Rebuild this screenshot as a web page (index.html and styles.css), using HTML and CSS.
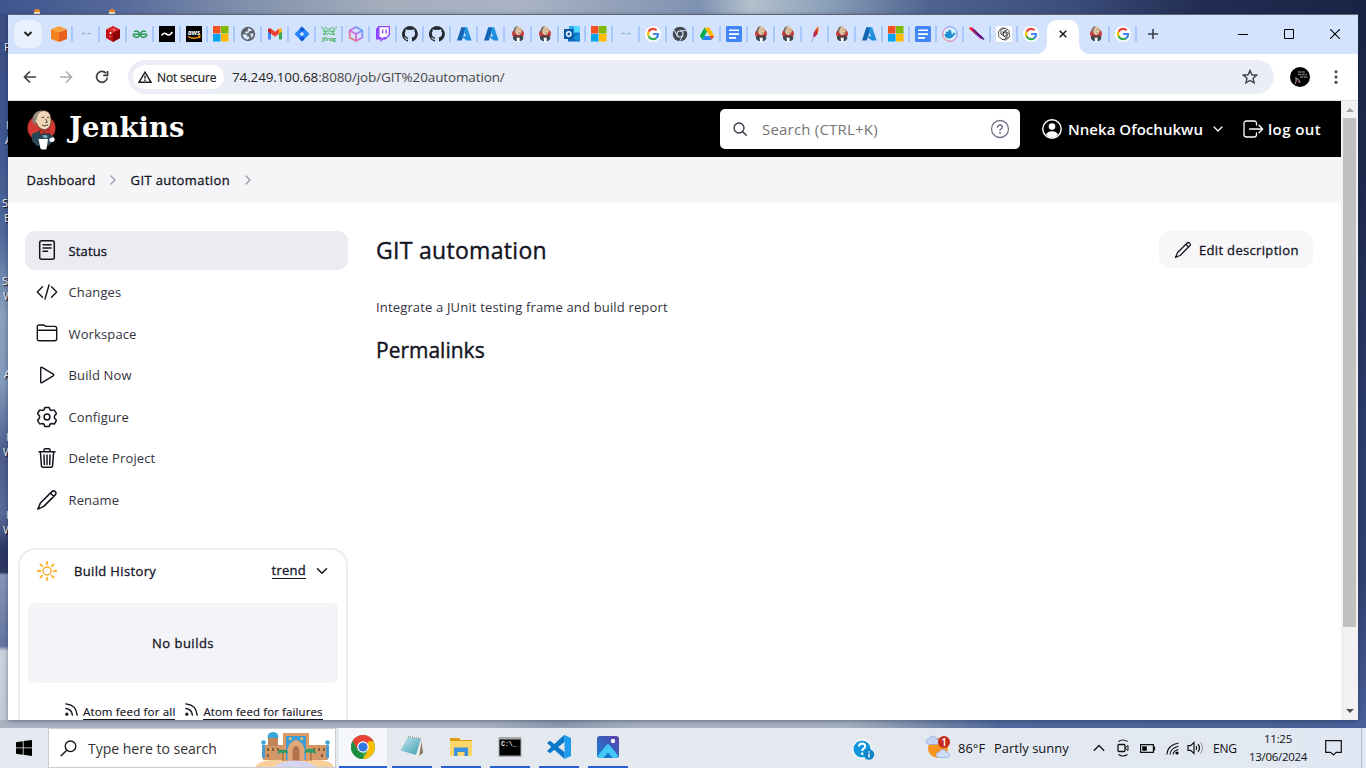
FILE: index.html
```html
<!DOCTYPE html>
<html lang="en">
<head>
<meta charset="utf-8">
<title>GIT automation [Jenkins]</title>
<link rel="stylesheet" href="styles.css">
</head>
<body>
<svg class="defs" aria-hidden="true">
  <defs>
    <linearGradient id="azg" x1="0" y1="0" x2="1" y2="1"><stop offset="0" stop-color="#2aa5e8"/><stop offset="1" stop-color="#1b82d8"/></linearGradient>
    <linearGradient id="cubeg" x1="0" y1="1" x2="1" y2="0"><stop offset="0" stop-color="#ff7a59"/><stop offset=".5" stop-color="#c56be8"/><stop offset="1" stop-color="#38bdf8"/></linearGradient>
    <linearGradient id="feag" x1="0" y1="1" x2="1" y2="0"><stop offset="0" stop-color="#8a2a8b"/><stop offset=".5" stop-color="#d22128"/><stop offset="1" stop-color="#f79a23"/></linearGradient>
    <linearGradient id="photog" x1="0" y1="1" x2="1" y2="0"><stop offset="0" stop-color="#1683d8"/><stop offset="1" stop-color="#5a3fa5"/></linearGradient>
    <linearGradient id="noteg" x1="0" y1="0" x2="1" y2="1"><stop offset="0" stop-color="#bfe6ea"/><stop offset="1" stop-color="#3f9db4"/></linearGradient>
    <symbol id="f-aws" viewBox="0 0 16 16"><path fill="#f9a13a" d="M8 0l8 3.3L8 6.6 0 3.3z"/><path fill="#f58220" d="M0 3.3l8 3.3V16l-8-3z"/><path fill="#e8601c" d="M16 3.3L8 6.6V16l8-3z"/></symbol>
    <symbol id="f-line" viewBox="0 0 16 16"><path fill="none" stroke="#86b3b5" stroke-width="1.200" d="M4 8q1.500-1.400 3-.5M8 8h1.500M10 7.500q1.500-.3 2.500.8"/></symbol>
    <symbol id="f-red" viewBox="0 0 16 16"><path fill="#c41212" d="M8 0l7 3.500v8.500l-7 4-7-4V3.500z"/><path fill="#8a0606" d="M8 7l7-3.500v8.500l-7 4z"/><path fill="#dd2c2c" d="M8 .5l6.500 3L8 6.500 1.500 3.500z"/><circle cx="5.500" cy="7" r="1.100" fill="#fff"/><circle cx="9" cy="3.800" r="1" fill="#f99"/><circle cx="5" cy="10.500" r=".8" fill="#f99"/></symbol>
    <symbol id="f-gfg" viewBox="0 0 16 16"><path fill="none" stroke="#2f9a52" stroke-width="1.500" d="M2 5.600q4-1.600 5.300 1.600.6 4-2.800 4.200Q1.400 11.300 1.300 8.300h13.400q-.1 3-3.200 3.100Q8 11.200 8.700 7.200 10 4 14 5.600"/></symbol>
    <symbol id="f-dark" viewBox="0 0 16 16"><path d="M0 0h16v16H0z"/><path fill="none" stroke="#fff" stroke-width="1.500" d="M2.500 9.500q2-3 3.700-2t3.300 1.600q1.500 0 4-3.100"/></symbol>
    <symbol id="f-awsb" viewBox="0 0 16 16"><path d="M0 0h16v16H0z"/><text x="8" y="8.500" text-anchor="middle" class="glyph-aws">aws</text><path fill="none" stroke="#f90" stroke-width="1.300" d="M2 10.500q6 3.500 12 0m-2-.3h2l-.5 2"/></symbol>
    <symbol id="f-ms" viewBox="0 0 16 16"><path fill="#f25022" d="M0 0h7.500v7.500H0z"/><path fill="#7fba00" d="M8 0h7.500v7.500H8z"/><path fill="#00a4ef" d="M0 8h7.500v7.500H0z"/><path fill="#ffb900" d="M8 8h7.500v7.500H8z"/></symbol>
    <symbol id="f-globe" viewBox="0 0 16 16"><circle cx="8" cy="8" r="7.200" fill="#5f6368"/><path fill="#d3e3fd" d="M2.500 8.300l4 .3 1 2 2-.2-.2 2-2 1.300Q3 13 2.500 8.300zM8 2.300l3 .6.800 2-2.600.3-.8 2-2.700.3-1-1.500 3-.8zM11.600 7.300l2 .4q0 3-2.200 4.500L11 9.500 9.700 8.600z"/></symbol>
    <symbol id="f-gmail" viewBox="0 0 16 16"><path fill="#4285f4" d="M1 4v9.500h3V7z"/><path fill="#34a853" d="M15 4v9.500h-3V7z"/><path fill="#ea4335" d="M1 3.500Q2.500 1.600 4.500 3L8 5.800 11.500 3Q13.500 1.600 15 3.500v2L8 10.800 1 5.500z"/><path fill="#fbbc04" d="M12 2.700Q15 2 15 4.500v1L12 7.800z"/><path fill="#c5221f" d="M1 5.500V4q.3-2 3-1.300v5.100z"/></symbol>
    <symbol id="f-jira" viewBox="0 0 16 16"><path fill="#2684ff" d="M8 .5L15.500 8 8 15.500.5 8z"/><path fill="#1559cf" d="M8 .5l3 3L7 6 5.500 3zM8 15.500l-3-3L9 10l1.500 3z"/><path fill="#d3e3fd" d="M8 5.700L10.300 8 8 10.300 5.700 8z"/></symbol>
    <symbol id="f-jfrog" viewBox="0 0 16 16"><g fill="none" stroke="#4cb85c" stroke-width="1"><path d="M0 1l4 2.500L2 5l4 .5L2 8.300h4l2-1.300 2 1.300h4l-4-2.800L14 5l-2-1.500L16 1M4 1l3 2h2l3-2M5 5h6"/></g><text x="8" y="15" text-anchor="middle" class="glyph-frog">jfrog</text></symbol>
    <symbol id="f-cube" viewBox="0 0 16 16"><path fill="none" stroke="url(#cubeg)" stroke-width="1.800" d="M8 1l6.300 3.500v7L8 15l-6.300-3.500v-7zM1.700 4.500L8 8l6.300-3.500M8 8v7"/></symbol>
    <symbol id="f-twitch" viewBox="0 0 16 16"><path fill="#9146ff" d="M3.500 0H15v9l-4.500 4.500H8L5.500 16v-2.500H1V3z"/><path fill="#fff" d="M4.500 1.200h9.200v7.300L11.200 11H8.800l-2.200 2v-2H4.500z"/><path fill="#9146ff" d="M7 3.500h1.300v4H7zM10.500 3.500h1.300v4h-1.300z"/></symbol>
    <symbol id="f-gh" viewBox="0 0 16 16"><path fill="#24292f" d="M8 0a8 8 0 0 0-2.500 15.600c.4.1.5-.2.5-.4v-1.500c-2.200.5-2.700-1-2.700-1-.4-.9-.9-1.200-.9-1.200-.7-.5.1-.5.1-.5.8.1 1.200.8 1.200.8.700 1.300 1.900.9 2.300.7.100-.5.300-.9.500-1.100-1.800-.2-3.600-.9-3.600-4 0-.9.300-1.600.8-2.100-.1-.2-.4-1 .1-2.100 0 0 .7-.2 2.200.8a7.600 7.600 0 0 1 4 0c1.500-1 2.200-.8 2.200-.8.4 1.100.2 1.900.1 2.100.5.600.8 1.300.8 2.100 0 3.100-1.900 3.700-3.700 3.900.3.300.6.800.6 1.500v2.300c0 .2.100.5.600.4A8 8 0 0 0 8 0z"/></symbol>
    <symbol id="f-azure" viewBox="0 0 16 16"><path fill="#1464b4" d="M5.300 1.200h5L5.800 14.600H1z"/><path fill="url(#azg)" d="M9.300 1.200h2L15.500 14.600h-4.800L5.200 10.300h4.600L8 5.500z"/></symbol>
    <symbol id="f-jk" viewBox="0 0 16 16"><ellipse cx="8" cy="7.800" rx="6" ry="5.200" fill="#c43a36"/><path fill="#3c4750" d="M3 10.500L6 9h4l3 1.500.3 2.500L11 15H5.500L3 13z"/><path fill="#e0c4a2" d="M4.600 4Q5.200.2 8.500.4q3.500.4 3.300 4.200-.1 3.800-3.300 4.700Q5 8.600 4.600 4z"/><path fill="#7b7068" d="M3.800 6Q3 .2 8.500 0 5.500 1.500 5.200 6.800z"/><path stroke="#8c7560" stroke-width=".7" d="M8 3.600h1.400M10.300 3.600h1M8.500 6.800h2.300"/><path fill="#c22" d="M6 9.300l2 .7 2-.7v1.700l-2-.5-2 .5z"/><path fill="#fff" d="M6.600 11.800h3.200L9.300 16H7.200z"/></symbol>
    <symbol id="f-outlook" viewBox="0 0 16 16"><path fill="#28a8ea" d="M5 0h10.500v14H5z"/><path fill="#50d9ff" d="M10 0h5.500v6H10z"/><path fill="#0f6cbd" d="M4 8l12-1v8.500H4z"/><path fill="#1490df" d="M16 7l-8 5 7 3.500h1z"/><path fill="#0a58a8" d="M0 3h9.500v10H0z"/><circle cx="4.800" cy="8" r="2.200" fill="none" stroke="#fff" stroke-width="1.400"/></symbol>
    <symbol id="f-g" viewBox="0 0 16 16"><circle cx="8" cy="8" r="8" fill="#fff"/><g fill="none" stroke-width="2.200"><path stroke="#ea4335" d="M3.600 5.700Q5.100 2.800 8 2.800q2 0 3.700 1.500"/><path stroke="#fbbc04" d="M3.700 5.500Q2.200 8 3.700 10.500"/><path stroke="#34a853" d="M3.600 10.300Q5.100 13.200 8 13.200q1.800 0 3.400-1.100"/><path stroke="#4285f4" d="M11.100 12.300Q13.300 10.500 13.100 8H8"/></g></symbol>
    <symbol id="f-cr" viewBox="0 0 16 16"><circle cx="8" cy="8" r="7.300" fill="#46494d"/><circle cx="8" cy="8" r="3" fill="#46494d" stroke="#d3e3fd" stroke-width="1.100"/><path fill="none" stroke="#d3e3fd" stroke-width="1" d="M8 4.700h6.700M5.200 9.700L2 4M10.800 9.700L7.600 15.300"/></symbol>
    <symbol id="f-drive" viewBox="0 0 16 16"><path fill="#00ac47" d="M5.600 1.500L8 5.600 3.500 14 .8 10z"/><path fill="#ffba00" d="M5.600 1.500h4.800L15.200 10h-4.700z"/><path fill="#2684fc" d="M5.300 10h5.200l2 4h-9z"/><path fill="#ea4335" d="M10.500 10h4.700l-2.700 4z"/></symbol>
    <symbol id="f-docs" viewBox="0 0 16 16"><rect width="16" height="16" rx="1.500" fill="#4285f4"/><path stroke="#fff" stroke-width="1.600" d="M3 4.300h10M3 8.100h10M3 11.900h7"/></symbol>
    <symbol id="f-feather" viewBox="0 0 16 16"><path fill="url(#feag)" d="M11.300 0q1.200 4-1 8.500L6.500 12Q5 7 11.300 0z"/><path stroke="#b9a2b8" d="M6.500 11l-2 5"/></symbol>
    <symbol id="f-docker" viewBox="0 0 16 16"><circle cx="8" cy="8" r="7.300" fill="#d9eefb" stroke="url(#cubeg)"/><path fill="#1f8fd0" d="M2.500 8h8.700l.6-2 1.200 1.500 1.500.1q-1 1.400-2.400 1.400-1.600 3.500-5.600 3.500Q2.800 12.200 2.500 8zM4 5.800h5.500V8H4zM6.500 4H9v2H6.500z"/></symbol>
    <symbol id="f-mvn" viewBox="0 0 16 16"><path stroke="#e0229a" stroke-width="3" d="M2 2L13 12.500"/><path stroke="#251a7a" stroke-width="1.600" d="M4 3.500L15 13.500"/><path stroke="#f01818" stroke-width="1.600" d="M.5 1.500L8 8.700"/><path stroke="#3a28d0" stroke-width="1" d="M4 5l6 6"/></symbol>
    <symbol id="f-gpt" viewBox="0 0 16 16"><rect width="16" height="16" rx="2" fill="#fff"/><g fill="none" stroke="#333" stroke-width=".9"><path d="M8 2.300a2.800 2.800 0 0 1 3.300 1.500 2.800 2.800 0 0 1 1.800 3.800 2.800 2.800 0 0 1-1 4.300 2.800 2.800 0 0 1-4.100 1.700 2.800 2.800 0 0 1-3.300-1.600A2.800 2.800 0 0 1 2.900 8.200a2.800 2.800 0 0 1 1-4.100A2.800 2.800 0 0 1 8 2.300z"/><path d="M8 2.300L5 4.200v4l3.500 2 3.500-1.800M11.300 3.800L7.500 5.600v4.200l3 2M13.100 7.600L9.500 5.500 6 7.500M8 13.600l3-1.800v-4L8 6"/></g></symbol>
    <symbol id="chev" viewBox="0 0 512 512"><path fill="none" stroke="currentColor" stroke-linecap="round" stroke-linejoin="round" stroke-width="48" d="M184 112l144 144-144 144"/></symbol>
    <symbol id="chevd" viewBox="0 0 512 512"><path fill="none" stroke="currentColor" stroke-linecap="round" stroke-linejoin="round" stroke-width="48" d="M112 184l144 144 144-144"/></symbol>
    <symbol id="pencil" viewBox="0 0 24 24"><path fill="none" stroke="currentColor" stroke-width="1.700" stroke-linejoin="round" d="M17.300 2.900q1.900-1.800 3.600-.1t.1 3.600L8.500 19 2 22l2.800-6.700zM15.700 4.400l3.800 3.800"/></symbol>
    <symbol id="rss" viewBox="0 0 16 16"><g fill="none" stroke="currentColor" stroke-width="1.500" stroke-linecap="round"><path d="M2 2q11 1 12 12M2 7q6 .5 7 7"/></g><circle cx="3" cy="13" r="1.700" fill="currentColor"/></symbol>
  </defs>
</svg>

<div class="desktop">
  <span class="cone cone-a"></span><span class="cone cone-b"></span>
  <span class="lbl l1">F</span><span class="lbl l2">I</span><span class="lbl l3">A</span><span class="lbl l4">S</span><span class="lbl l5">E</span><span class="lbl l6">S</span><span class="lbl l7">W</span><span class="lbl l8">A</span><span class="lbl l9">I</span><span class="lbl l10">W</span><span class="lbl l11">I</span><span class="lbl l12">W</span>

  <div class="window">
    <div class="tabstrip">
      <span class="tabsearch"><svg width="10" height="10" viewBox="0 0 10 10"><path d="M1.500 3L5 6.500 8.500 3" fill="none" stroke="#1f1f1f" stroke-width="1.900"/></svg></span>
      <div class="tabs">
        <i class="tab"><svg><use href="#f-aws"/></svg></i><i class="tab"><svg><use href="#f-line"/></svg></i><i class="tab"><svg><use href="#f-red"/></svg></i><i class="tab"><svg><use href="#f-gfg"/></svg></i><i class="tab"><svg><use href="#f-dark"/></svg></i><i class="tab"><svg><use href="#f-awsb"/></svg></i><i class="tab"><svg><use href="#f-ms"/></svg></i><i class="tab"><svg><use href="#f-globe"/></svg></i><i class="tab"><svg><use href="#f-gmail"/></svg></i><i class="tab"><svg><use href="#f-jira"/></svg></i><i class="tab"><svg><use href="#f-jfrog"/></svg></i><i class="tab"><svg><use href="#f-cube"/></svg></i><i class="tab"><svg><use href="#f-twitch"/></svg></i><i class="tab"><svg><use href="#f-gh"/></svg></i><i class="tab"><svg><use href="#f-gh"/></svg></i><i class="tab"><svg><use href="#f-azure"/></svg></i><i class="tab"><svg><use href="#f-azure"/></svg></i><i class="tab"><svg><use href="#f-jk"/></svg></i><i class="tab"><svg><use href="#f-jk"/></svg></i><i class="tab"><svg><use href="#f-outlook"/></svg></i><i class="tab"><svg><use href="#f-ms"/></svg></i><i class="tab"><svg><use href="#f-line"/></svg></i><i class="tab"><svg><use href="#f-g"/></svg></i><i class="tab"><svg><use href="#f-cr"/></svg></i><i class="tab"><svg><use href="#f-drive"/></svg></i><i class="tab"><svg><use href="#f-docs"/></svg></i><i class="tab"><svg><use href="#f-jk"/></svg></i><i class="tab"><svg><use href="#f-jk"/></svg></i><i class="tab"><svg><use href="#f-feather"/></svg></i><i class="tab"><svg><use href="#f-jk"/></svg></i><i class="tab"><svg><use href="#f-azure"/></svg></i><i class="tab"><svg><use href="#f-ms"/></svg></i><i class="tab"><svg><use href="#f-docs"/></svg></i><i class="tab"><svg><use href="#f-docker"/></svg></i><i class="tab"><svg><use href="#f-mvn"/></svg></i><i class="tab"><svg><use href="#f-gpt"/></svg></i><i class="tab last"><svg><use href="#f-g"/></svg></i>
      </div>
      <span class="active-tab"><svg width="8" height="8" viewBox="0 0 8 8"><path d="M.7.7l6.600 6.600M7.300.7L.7 7.300" stroke="#1f1f1f" stroke-width="1.600"/></svg></span>
      <div class="tabs after"><i class="tab"><svg><use href="#f-jk"/></svg></i><i class="tab"><svg><use href="#f-g"/></svg></i></div>
      <svg class="plus" width="10" height="10" viewBox="0 0 10 10"><path d="M5 0v10M0 5h10" stroke="#3c4043" stroke-width="1.600"/></svg>
      <div class="winctl">
        <svg width="10" height="10" viewBox="0 0 10 10"><path d="M0 5.500h10" stroke="#000"/></svg>
        <svg width="10" height="10" viewBox="0 0 10 10"><path d="M.5.5h9v9h-9z" fill="none" stroke="#000"/></svg>
        <svg width="10" height="10" viewBox="0 0 10 10"><path d="M0 0l10 10M10 0L0 10" stroke="#000" stroke-width="1.100"/></svg>
      </div>
    </div>
    <div class="toolbar">
      <svg class="nav" width="14" height="14" viewBox="0 0 14 14"><path d="M13 7H2M7 1.500L1.500 7 7 12.500" fill="none" stroke="#3c4043" stroke-width="1.700"/></svg>
      <svg class="nav" width="14" height="14" viewBox="0 0 14 14"><path d="M1 7h11M7 1.500L12.500 7 7 12.500" fill="none" stroke="#abadb1" stroke-width="1.700"/></svg>
      <svg class="nav" width="14" height="14" viewBox="0 0 14 14"><path d="M12.300 7.500A5.400 5.400 0 1 1 11 3.300M12.600 1v4.300H8.200" fill="none" stroke="#3c4043" stroke-width="1.700"/></svg>
      <div class="omnibox">
        <span class="chip"><svg width="14" height="12" viewBox="0 0 14 12"><path d="M7 1.200L13 11.300H1z" fill="none" stroke="#1f1f1f" stroke-width="1.400"/><path d="M7 4.500v3.300M7 8.600v1.300" stroke="#1f1f1f" stroke-width="1.400"/></svg><span class="chip-text">Not secure</span></span>
        <span class="url">74.249.100.68<span class="path">:8080/job/GIT%20automation/</span></span>
        <svg class="star" width="16" height="16" viewBox="0 0 16 16"><path d="M8 1.500l1.900 4.300 4.700.4-3.600 3.100 1.100 4.600L8 11.500l-4.100 2.400L5 9.300 1.400 6.200l4.700-.4z" fill="none" stroke="#3c4043" stroke-width="1.400"/></svg>
      </div>
      <svg class="avatar" width="20" height="20" viewBox="0 0 20 20"><circle cx="10" cy="10" r="10"/><path d="M8 5h7M8 7.500h9M10 10h8" stroke="#777" stroke-width="1.600" stroke-dasharray="3 .7"/><path d="M5 17q2-3 1-6 3 1 4 5" fill="none" stroke="#888" stroke-width="1.300"/><circle cx="8.500" cy="14.500" r=".9" fill="#b03050"/></svg>
      <svg class="kebab" width="4" height="14" viewBox="0 0 4 14"><g fill="#3c4043"><circle cx="2" cy="1.800" r="1.500"/><circle cx="2" cy="7" r="1.500"/><circle cx="2" cy="12.200" r="1.500"/></g></svg>
    </div>

    <div class="viewport">
      <div class="page">
        <header class="jheader">
          <svg class="butler" width="30" height="41" viewBox="0 0 30 41"><ellipse cx="14.500" cy="19" rx="14" ry="13" fill="#d33833"/><path fill="#2b4656" d="M5 25l7-3 9 1 5 4 1 5-6 5H10l-5-5z"/><path fill="#8d8377" d="M5.500 13Q4.500 2.500 15 1.500L10 8l-1.500 8z"/><path fill="#f0d6b7" stroke="#2a2018" stroke-width=".6" d="M8.500 9Q10.500 1.500 17 1.500q6.500.5 7 8 .8 9-5.500 11.300-7-.3-9.200-7-2.800-.8-.8-4.800z"/><path fill="#9b9084" d="M7 9Q8 2.500 15 1.300 10.500 4.500 10.500 8L9.500 12z"/><path fill="none" stroke="#333" stroke-width=".9" d="M14.500 8.500q2-1 3 .5M20 8.500q1.500-.8 2.500.3M18.800 10l1.500 3.200-2 .3M15 16q3 2 6-.2"/><path fill="#d33833" stroke="#6b1713" stroke-width=".6" d="M12.500 20.500l5 2.500 4.500-2.500.5 4.500-5-1-4 1.500z"/><path fill="#81b0c4" d="M15 26.500l4-.5 2 2-3 1.500z"/><path fill="#fff" d="M11.500 30h9.500l-1.500 10q-3 1.300-6-.3zM22.500 29.500l4-1.500 1.500 3-2 2-3.500-.5z"/></svg>
          <span class="wordmark">Jenkins</span>
          <div class="jsearch">
            <svg width="16" height="16" viewBox="0 0 16 16"><circle cx="7" cy="7" r="5" fill="none" stroke="#333340" stroke-width="1.300"/><path d="M10.700 10.700l3.600 3.600" stroke="#333340" stroke-width="1.400" stroke-linecap="round"/></svg>
            <span class="ph">Search (CTRL+K)</span>
            <svg class="help" width="20" height="20" viewBox="0 0 20 20"><circle cx="10" cy="10" r="8.500" fill="none" stroke="#73738c" stroke-width="1.300"/><path d="M7.600 8.200q.1-2.200 2.500-2.200 2.200.1 2.300 2 0 1-1.300 1.800-1 .6-1.100 1.700" fill="none" stroke="#73738c" stroke-width="1.500" stroke-linecap="round"/><circle cx="10" cy="14" r="1" fill="#73738c"/></svg>
          </div>
          <div class="user">
            <svg width="20" height="20" viewBox="0 0 20 20"><circle cx="10" cy="10" r="9.200" fill="none" stroke="#fff" stroke-width="1.400"/><circle cx="10" cy="7.600" r="3.300" fill="#fff"/><path fill="#fff" d="M4 15.700Q5.500 12.300 10 12.300t6 3.400Q13.500 18.500 10 18.500t-6-2.800z"/></svg>
            <span class="uname">Nneka Ofochukwu</span>
            <svg class="ud" width="14" height="14"><use href="#chevd"/></svg>
          </div>
          <div class="logout">
            <svg width="21" height="18" viewBox="0 0 21 18"><path d="M13.500 5V3.500Q13.500 1 11 1H3.500Q1 1 1 3.500v11Q1 17 3.500 17H11q2.500 0 2.500-2.500V13M6.500 9h13M16 5.300L19.700 9 16 12.700" fill="none" stroke="#fff" stroke-width="1.300" stroke-linecap="round" stroke-linejoin="round"/></svg>
            <span class="lo">log out</span>
          </div>
        </header>
        <nav class="crumbs"><span class="c1">Dashboard</span><svg width="14" height="14"><use href="#chev"/></svg><span class="c2">GIT automation</span><svg width="14" height="14"><use href="#chev"/></svg></nav>
        <div class="body">
          <aside class="side">
            <a class="task active"><svg width="22" height="22" viewBox="0 0 22 22"><rect x="3.700" y="1.700" width="14.600" height="18.600" rx="2" fill="none" stroke="#14141f" stroke-width="1.500"/><path d="M7 5.700h8M7 9h8M7 12.300h4.500" stroke="#14141f" stroke-width="1.500" stroke-linecap="round"/></svg><span class="t-st">Status</span></a>
            <a class="task"><svg width="22" height="22" viewBox="0 0 22 22"><path d="M6.500 5.800L1.300 11l5.200 5.200M15.500 5.800l5.200 5.200-5.200 5.200M13 4L9 18" fill="none" stroke="#14141f" stroke-width="1.400" stroke-linecap="round" stroke-linejoin="round"/></svg><span>Changes</span></a>
            <a class="task"><svg width="22" height="22" viewBox="0 0 22 22"><path d="M1.300 8.200V5q0-2 2-2h4q1 0 1.700.7t1.700.7h8q2 0 2 2v10.300q0 2-2 2H3.300q-2 0-2-2zh19.400" fill="none" stroke="#14141f" stroke-width="1.400" stroke-linejoin="round"/></svg><span>Workspace</span></a>
            <a class="task"><svg width="22" height="22" viewBox="0 0 22 22"><path d="M4.700 4.200q0-1.500 1.300-.8l11.200 6.800q1.200.8 0 1.600L6 18.600q-1.300.7-1.300-.8z" fill="none" stroke="#14141f" stroke-width="1.400" stroke-linejoin="round"/></svg><span>Build Now</span></a>
            <a class="task"><svg width="22" height="22" viewBox="0 0 22 22"><circle cx="11" cy="11" r="2.900" fill="none" stroke="#14141f" stroke-width="1.500"/><path d="M9.200 1.500h3.600q.5 0 .6.600.3 2.300 2.500 2.400.6 0 1.500-.4.800-.3 1.200.4l1.600 2.700q.4.700-.3 1.200-1.600 1.100-1.600 2.600t1.600 2.600q.7.500.3 1.200l-1.600 2.700q-.4.700-1.200.4-.9-.4-1.500-.4-2.200.1-2.500 2.400-.1.600-.6.600H9.200q-.5 0-.6-.6-.3-2.300-2.500-2.400-.6 0-1.500.4-.8.3-1.200-.4L1.800 14.800q-.4-.7.300-1.200 1.600-1.100 1.600-2.600T2.100 8.400q-.7-.5-.3-1.200l1.600-2.700q.4-.7 1.200-.4.900.4 1.500.4 2.200-.1 2.500-2.400.1-.6.600-.6z" fill="none" stroke="#14141f" stroke-width="1.500" stroke-linejoin="round"/></svg><span>Configure</span></a>
            <a class="task"><svg width="22" height="22" viewBox="0 0 22 22"><path d="M4.400 5l1 13.600q.1 1.700 1.800 1.700h7.600q1.700 0 1.800-1.700L17.600 5M3 4.700h16M8 4.500V3q0-1.300 1.300-1.300h3.400Q14 1.700 14 3v1.500M11 8v9.500M8 8l.3 9.500M14 8l-.3 9.500" fill="none" stroke="#14141f" stroke-width="1.500" stroke-linecap="round"/></svg><span>Delete Project</span></a>
            <a class="task"><svg width="22" height="22"><use href="#pencil"/></svg><span>Rename</span></a>
            <section class="history">
              <div class="hhead">
                <svg width="20" height="20" viewBox="0 0 20 20"><circle cx="10" cy="10" r="4" fill="none" stroke="#fcaf2b" stroke-width="1.500"/><path d="M10 .7v2.600M10 16.700v2.600M.7 10h2.600M16.700 10h2.600M3.400 3.400l1.800 1.800M14.800 14.800l1.800 1.800M16.600 3.400l-1.800 1.800M5.200 14.800l-1.800 1.800" stroke="#fcaf2b" stroke-width="1.800" stroke-linecap="round"/></svg>
                <span class="htitle">Build History</span><span class="trend">trend</span>
                <svg class="hd" width="16" height="16"><use href="#chevd"/></svg>
              </div>
              <div class="nobuilds">No builds</div>
              <div class="feeds"><svg width="15" height="15"><use href="#rss"/></svg><span class="fa">Atom feed for all</span><svg width="15" height="15"><use href="#rss"/></svg><span class="ff">Atom feed for failures</span></div>
            </section>
          </aside>
          <main class="main">
            <div class="titlebar"><h1>GIT automation</h1><span class="edit"><svg width="18" height="18"><use href="#pencil"/></svg><span>Edit description</span></span></div>
            <p class="desc">Integrate a JUnit testing frame and build report</p>
            <h2>Permalinks</h2>
          </main>
        </div>
      </div>
      <div class="scroll"><i class="up"></i><i class="thumb"></i><i class="down"></i></div>
    </div>
  </div>

  <div class="taskbar">
    <span class="start"><svg width="16" height="16" viewBox="0 0 16 16"><path d="M0 2.200L6.800 1.200v6.300H0zM7.600 1.100L16 0v7.500H7.600zM0 8.300h6.800v6.400L0 13.800zM7.600 8.300H16V16l-8.400-1.200z"/></svg></span>
    <div class="tsearch">
      <svg width="17" height="17" viewBox="0 0 17 17"><circle cx="10.500" cy="6.300" r="5.300" fill="none" stroke="#111" stroke-width="1.300"/><path d="M6.800 10.200L.8 16" stroke="#111" stroke-width="1.400"/></svg>
      <span class="ts">Type here to search</span>
      <svg class="castle" width="80" height="36" viewBox="0 0 80 36"><path fill="#f8cf9a" d="M0 36q4-7 18-7h44q14 0 17 7z"/><path fill="#d29767" d="M8 14h20v15H8zM54 14h19v15H54z"/><path fill="#c08458" d="M13 7h10v8H13z"/><path fill="#39a6d8" d="M12.500 7Q12.500 1 18 1t5.500 6z"/><path fill="#4b9cd0" d="M7 14h3v13H7zM71 14h3v13h-3z"/><circle cx="8.500" cy="11.500" r="2.200" fill="#39a6d8"/><circle cx="72.500" cy="11.500" r="2.200" fill="#39a6d8"/><path fill="#dc9c66" d="M28 2h26v28H28z"/><path fill="#3f9bd4" d="M31 5h20v24H31z"/><path fill="#e0a878" d="M32.500 30V18q1-6 8.500-9.500 7.500 3.500 8.500 9.500v12z"/><path fill="#b3744a" d="M37.500 30v-9q0-6 3.500-6t3.500 6v9z"/><path fill="#f3c94f" d="M34 6.500h2.500V9H34zM45.500 6.500H48V9h-2.500z"/><path fill="#8c5c38" d="M12 17h2v3h-2zM17 17h2v3h-2zM22 17h2v3h-2zM12 23h2v3h-2zM58 17h2v3h-2zM63 17h2v3h-2zM68 17h2v3h-2zM66 23h2v3h-2z"/><path stroke="#9a6a40" stroke-width="1.200" d="M28 22v8M56 21v9"/><path fill="#2e9a68" d="M22 23q1-5 5.500-4 5-1 6 4-3-2-5.500-.5-3-1.500-6 .5zM49 22q2-5 6-4 6-.5 6 5-3-2.500-6-1-3-1.500-6 0z"/><path fill="#d6d5f2" d="M18 36q8-6 22-6.500 14 .5 22 6.500z"/></svg>
    </div>
    <div class="apps">
      <span class="app cur"><svg width="24" height="24" viewBox="0 0 24 24"><circle cx="12" cy="12" r="12" fill="#34a853"/><path fill="#ea4335" d="M1.600 6A12 12 0 0 1 22.400 6L17 9H9L6.500 14.500z"/><path fill="#fbbc04" d="M22.400 6.200A12 12 0 0 1 12 24l5-9.500V6.200z"/><path fill="#1f8f43" d="M1.600 6l5.200 9 5.200 2.500L12 24A12 12 0 0 1 1.600 6z"/><circle cx="12" cy="12" r="5.800" fill="#fff"/><circle cx="12" cy="12" r="4.600" fill="#3578e5"/></svg></span>
      <span class="app"><svg width="24" height="24" viewBox="0 0 24 24"><path fill="#8a7a5c" d="M21 3l2 15-5 4z"/><path fill="#f1f1ec" d="M9 1l13 2-3 19-6-1z"/><path fill="url(#noteg)" d="M8 2l13 2-5 16L.5 15.500z"/><path stroke="#777" stroke-dasharray="1 1" d="M8 1.500l13 2"/></svg></span>
      <span class="app"><svg width="24" height="24" viewBox="0 0 24 24"><path fill="#d99b12" d="M1 3h9l1.500 2H23v4H1z"/><path fill="#ffd668" d="M1 6h22v15H1z"/><path fill="#3a92dc" d="M5 12.500h14V21h-3.500v-4h-7v4H5z"/></svg></span>
      <span class="app"><svg width="24" height="24" viewBox="0 0 24 24"><path fill="#a9a9a9" d="M.5 2h23v20H.5z"/><path d="M1.500 4.500h21v16h-21z"/><text x="3" y="11" class="glyph-cmd">C:\_</text></svg></span>
      <span class="app"><svg width="24" height="24" viewBox="0 0 24 24"><path fill="#1f9cf0" d="M17.500 0L24 3v18l-6.500 3z"/><path fill="#0a78c8" d="M17.500 0v7L3 18.200 0 16 17 0zM0 8l3-2.200L17.500 17v7L0 8z"/></svg></span>
      <span class="app"><svg width="24" height="24" viewBox="0 0 24 24"><rect x="1" y="1" width="22" height="22" rx="3" fill="url(#photog)"/><path fill="#41c8f5" d="M2 20.500L10.500 10q1.500-1.500 3 0L22 20.500 20.500 23h-17z"/><path fill="#1878d0" d="M7.500 23L12 17.500l5 5.500z"/><circle cx="17" cy="6" r="2.200" fill="#f4f4ff"/></svg></span>
    </div>
    <svg class="qhelp" width="24" height="22" viewBox="0 0 24 22"><circle cx="10" cy="10" r="10" fill="#fff"/><circle cx="10" cy="10" r="8.600" fill="#1296db"/><path d="M7 7.500Q7.200 4.500 10.200 4.500q3 .2 3 2.700 0 1.400-1.700 2.400-1.300.8-1.300 2.400" fill="none" stroke="#fff" stroke-width="2"/><circle cx="10.200" cy="14.700" r="1.300" fill="#fff"/><circle cx="17" cy="15.500" r="5.200" fill="#1084c8"/><path d="M17 12.300v1.300M17 14.500v4" stroke="#fff" stroke-width="1.400"/></svg>
    <div class="weather">
      <svg width="26" height="26" viewBox="0 0 26 26"><circle cx="13" cy="13" r="10" fill="#f7941d"/><path fill="#c3d4f4" stroke="#90abe0" stroke-width=".7" d="M4 9.500q-3-.3-3-2.700T4 4q1-3 4-3t4 3q2 .5 2 2.800t-3 2.700z"/><path fill="#cfdcf6" stroke="#90abe0" stroke-width=".7" d="M14 22.500q-3-.3-3-2.500t3-2.700q1-3 4-2.800 3 0 3.700 2.800 3 .5 3 2.700t-3 2.500z"/><circle cx="19" cy="7" r="6" fill="#c42b1c"/><text x="19" y="10.500" text-anchor="middle" class="glyph-badge">1</text></svg>
      <span class="temp">86°F</span><span class="cond">Partly sunny</span>
    </div>
    <div class="tray">
      <svg width="12" height="8" viewBox="0 0 12 8"><path d="M.8 6.700L6 1.500l5.200 5.200" fill="none" stroke="#111" stroke-width="1.300"/></svg>
      <svg class="meet" width="12" height="18" viewBox="0 0 12 18"><path d="M1.500 2.500Q6-.5 10.500 2.500M1.500 15.500q4.500 3 9 0" fill="none" stroke="#111" stroke-width="1.200"/><rect x="1" y="5.500" width="7" height="7" rx="1" fill="none" stroke="#111" stroke-width="1.300"/><path d="M8.500 8.500l2.500-2v5l-2.500-2z" fill="none" stroke="#111"/></svg>
      <svg class="bat" width="16" height="9" viewBox="0 0 16 9"><path d="M.6.600h12.800v7.800H.6zM14.500 2.500v4" fill="none" stroke="#111" stroke-width="1.200"/><path d="M2.300 2.300h4.500v4.400H2.300z"/></svg>
      <svg class="wifi" width="14" height="13" viewBox="0 0 14 13"><g fill="none" stroke="#111" stroke-width="1.100"><path d="M.8 12.500Q1.500 3 12.500 1M4 12.500Q4.500 6 12.500 4.200M7 12.500q.5-4 5.500-5"/></g><circle cx="11" cy="11" r="1.600"/></svg>
      <svg class="vol" width="17" height="14" viewBox="0 0 17 14"><path d="M1 4.700h2.500L7 1.500v11L3.500 9.300H1z" fill="none" stroke="#111" stroke-width="1.200"/><path d="M9 5q1.500 2 0 4M11 3.200q3 3.800 0 7.600" fill="none" stroke="#111" stroke-width="1.200"/><path d="M13.500 1.200q4 5.800 0 11.600" fill="none" stroke="#999"/></svg>
      <span class="eng">ENG</span>
      <span class="clock"><span class="time">11:25</span><span class="date">13/06/2024</span></span>
      <svg class="note" width="17" height="16" viewBox="0 0 17 16"><path d="M.7.7h15.600v11.600h-5L8.500 15l-2.800-2.700h-5z" fill="none" stroke="#111" stroke-width="1.200"/></svg>
      <i class="peek"></i>
    </div>
  </div>
</div>
</body>
</html>
```

FILE: styles.css
```css
* { box-sizing: border-box; }
body { margin: 0; width: 1366px; height: 768px; overflow: hidden; font-family: "Open Sans", "Noto Sans", sans-serif; color: #14141f; }
svg { flex: none; display: block; }
.defs { position: absolute; width: 0; height: 0; }
.glyph-aws { font: 700 6.500px "Open Sans", sans-serif; fill: #fff; }
.glyph-frog { font: 700 6px "Open Sans", sans-serif; fill: #3fae50; }
.glyph-cmd { font: 700 6.500px "Liberation Mono", monospace; fill: #eee; }
.glyph-badge { font: 600 10px "Open Sans", sans-serif; fill: #fff; }

.desktop {
  position: relative; width: 1366px; height: 768px; overflow: hidden;
  background:
    linear-gradient(90deg, #a9b2c0 0, #a9b2c0 480px, #8d9ab0 560px, #a8b2c0 640px, #a5afbf 850px, #6f83a8 940px, #51699c 1000px, #4a6098 100%) 0 720px / 1366px 8px no-repeat,
    linear-gradient(180deg, #3b4f85 0, #41578f 130px, #50689c 220px, #8aa0be 300px, #8299ba 370px, #4c5c8e 440px, #5a6a98 500px, #2c3862 535px, #2c3862 558px, #8796ba 561px, #64769f 632px, #ccd3de 637px, #c0c8d4 100%) 0 14px / 8px 714px no-repeat,
    linear-gradient(180deg, #1a2345 0, #1f2a4e 190px, #2c3d6c 420px, #30406f 560px, #4a6098 100%) 1358px 14px / 8px 714px no-repeat,
    linear-gradient(90deg, #3f558c 0, #53679a 110px, #7f8fab 240px, #a3adbc 380px, #a9b3c3 520px, #7f92b2 700px, #b3c1cc 750px, #8fa3bb 820px, #4e638f 930px, #3c4e7c 1070px, #222d52 1200px, #1a2345 100%);
}
.cone { position: absolute; top: 9px; width: 6px; height: 5px; border-radius: 3px 3px 0 0; background: linear-gradient(#ef8a1d 60%, #f4e6d8 60%); }
.cone-a { left: 34px; } .cone-b { left: 109px; }
.lbl { position: absolute; left: 2px; font-size: 11px; line-height: 14px; color: #fff; text-shadow: 1px 1px 1px #000; }
.l1 { left: 4px; top: 40px; } .l2 { left: 6px; top: 118px; } .l3 { left: 5px; top: 133px; } .l4 { top: 196px; } .l5 { left: 4px; top: 211px; } .l6 { top: 274px; } .l7 { left: 3px; top: 289px; }
.l8 { left: 4px; top: 367px; } .l9 { left: 6px; top: 430px; } .l10 { left: 3px; top: 445px; } .l11 { left: 6px; top: 508px; } .l12 { left: 3px; top: 523px; }

.window { position: absolute; left: 8px; top: 14px; width: 1350px; height: 706px; display: flex; flex-direction: column; border-top: 1px solid #5f6673; background: #fff; box-shadow: 0 1px 5px rgba(20,30,60,.45); }
.tabstrip { height: 39px; flex: none; display: flex; align-items: center; background: #d3e3fd; padding: 0 0 1px 6px; }
.tabsearch { width: 28px; height: 28px; border-radius: 9px; background: #e9f1fe; display: flex; align-items: center; justify-content: center; }
.tabs { display: flex; margin-left: 4px; }
.tab { width: 27px; height: 16px; padding-left: 5px; border-right: 2px solid #a8c7fa; }
.tab svg { width: 16px; height: 16px; }
.tab.last { border-right-color: transparent; }
.active-tab { position: relative; align-self: flex-end; width: 32px; height: 34px; margin: 0 0 -1px 2px; border-radius: 10px 10px 0 0; background: #fff; display: flex; align-items: center; justify-content: center; padding-bottom: 6px; }
.active-tab::before, .active-tab::after { content: ""; position: absolute; bottom: 0; width: 10px; height: 10px; }
.active-tab::before { left: -10px; background: radial-gradient(circle at 0 0, transparent 9.500px, #fff 10px); }
.active-tab::after { right: -10px; background: radial-gradient(circle at 100% 0, transparent 9.500px, #fff 10px); }
.after { margin-left: 4px; }
.plus { margin-left: 11px; }
.winctl { margin-left: auto; display: flex; gap: 36px; padding-right: 18px; }
.toolbar { height: 47px; flex: none; display: flex; align-items: center; padding: 0 20px 0 15px; background: #fff; border-bottom: 1px solid #dcdfe4; }
.nav { margin-right: 22px; }
.omnibox { width: 1146px; height: 34px; margin-left: -3px; border-radius: 17px; background: #ebeef7; display: flex; align-items: center; padding-left: 5px; }
.chip { width: 91px; height: 24px; border-radius: 12px; background: #fff; display: flex; align-items: center; padding-left: 5px; gap: 5px; }
.chip-text { font-size: 12px; letter-spacing: -.15px; color: #1f1f1f; white-space: nowrap; -webkit-text-stroke: .2px currentColor; }
.url { margin-left: 8px; font-size: 13.500px; letter-spacing: -.13px; color: #1f1f1f; }
.path { color: #474747; }
.star { margin-left: auto; margin-right: 16px; }
.avatar { margin-left: 16px; }
.kebab { margin-left: auto; }

.viewport { flex: 1; min-height: 0; display: flex; }
.page { flex: 1; overflow: hidden; }
.jheader { height: 56px; background: #000; color: #fff; display: flex; align-items: center; padding-left: 19px; }
.wordmark { font: 700 27.500px/1 "DejaVu Serif", serif; letter-spacing: 0; margin-left: 12px; width: 120px; padding-bottom: 3px; }
.jsearch { margin-left: 531px; width: 300px; height: 40px; border-radius: 5px; background: #fff; display: flex; align-items: center; padding: 0 10px 0 12px; }
.ph { margin-left: 14px; font-size: 15px; letter-spacing: .2px; color: #757575; }
.help { margin-left: auto; }
.user { display: flex; align-items: center; margin-left: 22px; width: 201px; }
.uname { margin-left: 6px; font-size: 15px; font-weight: 600; white-space: nowrap; width: 136px; letter-spacing: .04px; }
.ud { margin-left: 7px; }
.logout { display: flex; align-items: center; }
.lo { margin-left: 4px; font-size: 15px; font-weight: 600; white-space: nowrap; letter-spacing: .4px; }
.crumbs, .task.active, .hhead, .nobuilds, .edit { font-size: 13px; font-weight: 500; -webkit-text-stroke: .3px currentColor; }
.crumbs { height: 46px; background: #f5f5f8; display: flex; align-items: center; padding-left: 18.500px; }
.c1 { letter-spacing: .22px; }
.c2 { letter-spacing: .37px; }
.crumbs svg { color: #9d9db0; margin: 0 10.500px; }
.body { display: flex; padding: 28px 28px 0 10px; }
.side { width: 330px; flex: none; }
.task { display: flex; align-items: center; height: 38.500px; margin: 0 0 3.100px 7px; width: 323px; border-radius: 10px; padding-left: 11px; font-size: 13px; letter-spacing: .13px; color: #333340; }
.task svg { color: #14141f; }
.task span { margin-left: 10.500px; padding-top: .5px; }
.task.active { background: #ebecf2; color: #14141f; }
.history { margin-top: 29px; width: 330px; height: 210px; border: 2px solid #ebebf2; border-radius: 17px; padding: 0 8px; }
.hhead { height: 42px; display: flex; align-items: center; padding-left: 9px; }
.htitle { margin-left: 17px; letter-spacing: .35px; }
.trend { margin-left: auto; border-bottom: 1px solid #14141f; line-height: 15px; letter-spacing: .25px; }
.hd { margin: 0 8px 0 8px; }
.nobuilds { margin-top: 11px; height: 80px; width: 310px; border-radius: 6px; background: #f3f3f8; display: flex; align-items: center; justify-content: center; letter-spacing: .5px; }
.feeds { display: flex; align-items: center; margin-top: 16px; padding-left: 36px; font-size: 11.500px; white-space: nowrap; -webkit-text-stroke: .15px currentColor; }
.feeds span { border-bottom: 1px solid #14141f; line-height: 14px; margin: 6px 9px 0 4px; letter-spacing: .18px; }
.feeds .ff { letter-spacing: .1px; }
.main { flex: 1; margin-left: 28px; }
.titlebar { display: flex; align-items: center; height: 37px; }
h1 { margin: 0; font-size: 23px; font-weight: 500; letter-spacing: .3px; -webkit-text-stroke: .4px currentColor; }
.edit { margin-left: auto; width: 154px; height: 37px; border-radius: 10px; background: #f7f7fa; display: flex; align-items: center; padding-left: 15px; white-space: nowrap; }
.edit span { margin-left: 7px; letter-spacing: .33px; }
.desc { margin: 29px 0 0; font-size: 13px; line-height: 20px; letter-spacing: .16px; color: #333340; }
h2 { margin: 18px 0 0; font-size: 21px; line-height: 30px; font-weight: 500; -webkit-text-stroke: .4px currentColor; }
.scroll { width: 17px; background: #f1f1f1; display: flex; flex-direction: column; align-items: center; }
.up { margin-top: 7px; border: 4px solid transparent; border-top: 0; border-bottom-color: #a3a3a3; }
.thumb { margin-top: 6px; width: 13px; height: 509px; background: #c1c1c1; }
.down { margin: auto 0 7px; border: 4px solid transparent; border-bottom: 0; border-top-color: #505050; }

.taskbar { position: absolute; left: 0; top: 728px; width: 1366px; height: 40px; background: linear-gradient(90deg, #e3e8f1, #e5e9ef 50%, #e1e8f3); display: flex; align-items: center; color: #111; }
.start { width: 48px; display: flex; justify-content: center; }
.tsearch { width: 288px; height: 40px; border: 1px solid #c9ccd2; background: #fff; display: flex; align-items: center; padding-left: 11px; }
.ts { margin-left: 11px; font-size: 14px; width: 144px; white-space: nowrap; color: #333; }
.castle { margin-left: 25px; align-self: flex-end; }
.apps { display: flex; gap: 9px; align-self: stretch; margin-left: 3px; }
.app { width: 40px; border-bottom: 2px solid #2a5fcf; display: flex; align-items: center; justify-content: center; }
.app.cur { width: 48px; background: #f5f7fa; margin-right: -4px; }
.qhelp { margin-left: 224px; margin-top: 4px; }
.weather { display: flex; align-items: center; margin-left: 49px; font-size: 13px; white-space: nowrap; }
.temp { margin-left: 7px; width: 36px; }
.cond { width: 76px; }
.tray { display: flex; align-items: center; margin-left: 23px; flex: 1; }
.meet { margin-left: 12px; } .bat { margin-left: 11px; } .wifi { margin-left: 10px; } .vol { margin-left: 7px; }
.eng { margin-left: 9px; font-size: 12px; width: 24px; letter-spacing: -.2px; }
.clock { display: flex; flex-direction: column; align-items: center; margin-left: 11px; font-size: 11.500px; line-height: 18px; width: 60px; white-space: nowrap; letter-spacing: -.3px; }
.note { margin-left: 17px; }
.peek { margin-left: auto; margin-right: 4px; width: 1px; height: 40px; background: #b5bcc8; }
```
